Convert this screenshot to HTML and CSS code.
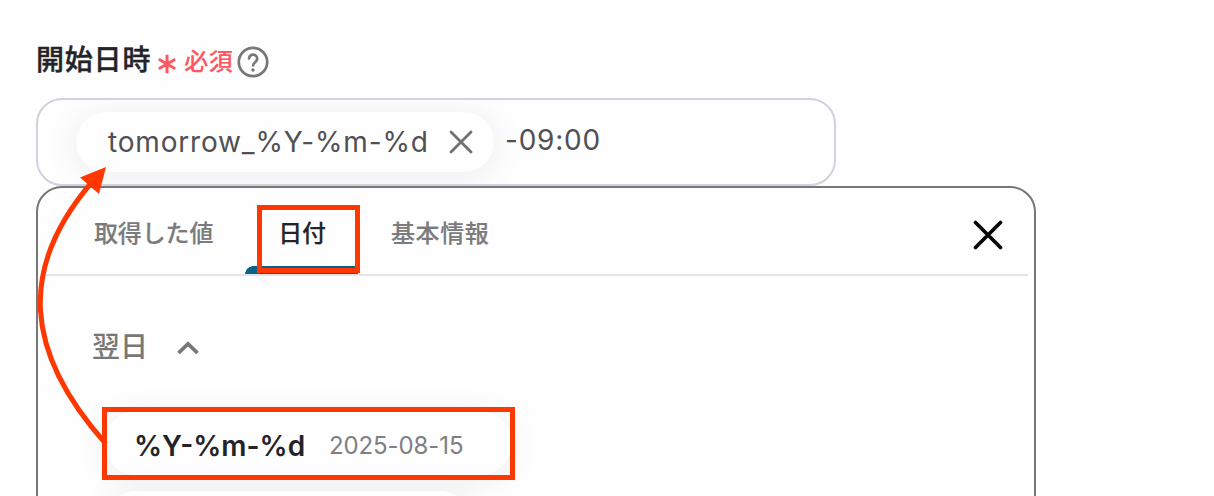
FILE: index.html
```html
<!DOCTYPE html>
<html lang="ja">
<head>
<meta charset="utf-8">
<title>開始日時</title>
<link rel="stylesheet" href="styles.css">
</head>
<body>
<main class="page">
  <div class="label-row">
    <span class="label">開始日時</span>
    <svg class="asterisk" width="18" height="20" viewBox="0 0 18 20"><path d="M9 .8v18.400M.8 5.300l16.400 9.400M17.200 5.300L.8 14.700"/></svg>
    <span class="required">必須</span>
    <svg class="help" width="32" height="32" viewBox="0 0 32 32"><circle cx="16" cy="16" r="14.200"/><path d="M12 12.300a4.100 4.100 0 1 1 6.300 3.800c-1.500 1-2.200 1.800-2.200 3.400"/><circle class="help-dot" cx="16" cy="24" r="1.700"/></svg>
  </div>
  <div class="field">
    <div class="chip">
      <span class="chip-text">tomorrow_%Y-%m-%d</span>
      <svg class="chip-close" width="24" height="24" viewBox="0 0 24 24"><path d="M2 2l20 20M22 2L2 22"/></svg>
    </div>
    <span class="suffix">-09:00</span>
  </div>
  <section class="panel">
    <nav class="tabs">
      <span class="tab">取得した値</span>
      <span class="tab tab-active">日付</span>
      <span class="tab tab-wide">基本情報</span>
      <svg class="close" width="30" height="30" viewBox="0 0 30 30"><path d="M2.500 2.500l25 25M27.500 2.500l-25 25"/></svg>
    </nav>
    <div class="group">
      <span class="group-name">翌日</span>
      <svg class="chevron" width="24" height="16" viewBox="0 0 24 16"><path d="M2.500 13L12 3.800l9.500 9.200"/></svg>
    </div>
    <div class="options">
      <div class="option"><span class="option-name">%Y-%m-%d</span><span class="option-value">2025-08-15</span></div>
      <div class="option option-next"></div>
    </div>
  </section>
  <svg class="annotation" width="1214" height="496" viewBox="0 0 1214 496">
    <rect x="259.500" y="207.500" width="98" height="63"/>
    <rect x="104.500" y="409.500" width="408" height="68"/>
    <path d="M106 444C24 352 18 268 92 182"/>
    <path class="arrowhead" d="M106 167L80 177.500L99 194Z"/>
  </svg>
</main>
</body>
</html>
```
FILE: styles.css
```css
* { box-sizing: border-box; }
body { margin: 0; background: #fefefe; }
svg { display: block; flex: none; fill: none; stroke-linecap: round; stroke-linejoin: round; }
span { white-space: nowrap; }
.page {
  position: relative;
  width: 1214px;
  height: 496px;
  overflow: hidden;
  padding: 40px 0 0 36px;
  font-family: Inter, "Noto Sans CJK JP", sans-serif;
}
.label-row { display: flex; align-items: center; height: 40px; margin-bottom: 18px; padding-top: 3px; }
.label { margin-top: -7px; font: 500 28px/40px "Noto Sans CJK JP", sans-serif; letter-spacing: .8px; color: #242428; -webkit-text-stroke: .4px #242428; }
.asterisk { margin: 4px 0 0 7px; stroke: #ff5662; stroke-width: 3; stroke-linecap: butt; }
.required { margin: -4px 0 0 8px; font: 500 24px/36px "Noto Sans CJK JP", sans-serif; letter-spacing: .5px; color: #ff5662; -webkit-text-stroke: .15px #ff5662; }
.help { margin-left: 4px; stroke: #777; stroke-width: 2.7; }
.help-dot { fill: #777; stroke: none; }
.field {
  display: flex;
  width: 800px;
  height: 88px;
  padding: 12px 0 0 38px;
  border: 2px solid #d0d2dc;
  border-radius: 26px;
  overflow: hidden;
}
.chip {
  display: flex;
  align-items: center;
  width: 418px;
  height: 60px;
  padding-left: 32px;
  border-radius: 30px;
  background: #fefefe;
  box-shadow: 0 4px 36px rgba(50, 30, 60, .08);
}
.chip-text { width: 341px; font-size: 28px; line-height: 40px; letter-spacing: .82px; color: #505055; }
.chip-close { stroke: #707074; stroke-width: 2.8; }
.suffix { margin: 8px 0 0 11px; font-size: 28px; line-height: 40px; letter-spacing: .75px; color: #505055; }
.panel {
  width: 1000px;
  height: 340px;
  border: 2px solid #777;
  border-radius: 26px;
  background: #fefefe;
}
.tabs {
  display: flex;
  align-items: center;
  height: 88px;
  margin: 0 6px 0 8px;
  padding-right: 25px;
  border-bottom: 2px solid #e4e4e6;
}
.tab {
  height: 86px;
  padding: 0 32px 0 33px;
  font: 500 24px/88px "Noto Sans CJK JP", sans-serif;
  letter-spacing: -.15px;
  color: #7b7b7d;
  -webkit-text-stroke: .15px currentColor;
}
.tab:first-child { padding-left: 48px; }
.tab-wide { letter-spacing: .6px; }
.tab-active {
  color: #242428;
  background:
    radial-gradient(circle at 8px 8px, #0b6285 7.5px, transparent 8px) 0 100% / 8px 8px no-repeat,
    linear-gradient(#0b6285, #0b6285) 8px 100% / 100% 8px no-repeat;
}
.close { margin-left: auto; margin-top: 7px; stroke: #050505; stroke-width: 3.7; }
.group { display: flex; align-items: center; height: 40px; margin: 50px 0 0 54px; }
.group-name { margin-top: -3px; font: 500 28px/40px "Noto Sans CJK JP", sans-serif; color: #777; }
.chevron { margin: 4px 0 0 28px; stroke: #777; stroke-width: 3.8; stroke-linecap: butt; stroke-linejoin: miter; }
.options { display: flex; flex-direction: column; gap: 16px; padding: 45px 0 0 66px; }
.option {
  display: flex;
  align-items: center;
  width: 408px;
  height: 64px;
  padding: 6px 0 0 30px;
  border-radius: 32px;
  background: #fefefe;
  box-shadow: 0 4px 32px rgba(50, 30, 60, .08);
}
.option-next { width: 368px; }
.option-name { width: 195px; font-size: 28px; font-weight: 600; letter-spacing: 0; color: #242428; }
.option-value { margin-top: -1px; font-size: 24px; letter-spacing: -.1px; color: #808082; }
.annotation { position: absolute; left: 0; top: 0; stroke: #ff3700; stroke-width: 5; stroke-linejoin: miter; stroke-linecap: butt; }
.arrowhead { fill: #ff3700; stroke: none; }
```
